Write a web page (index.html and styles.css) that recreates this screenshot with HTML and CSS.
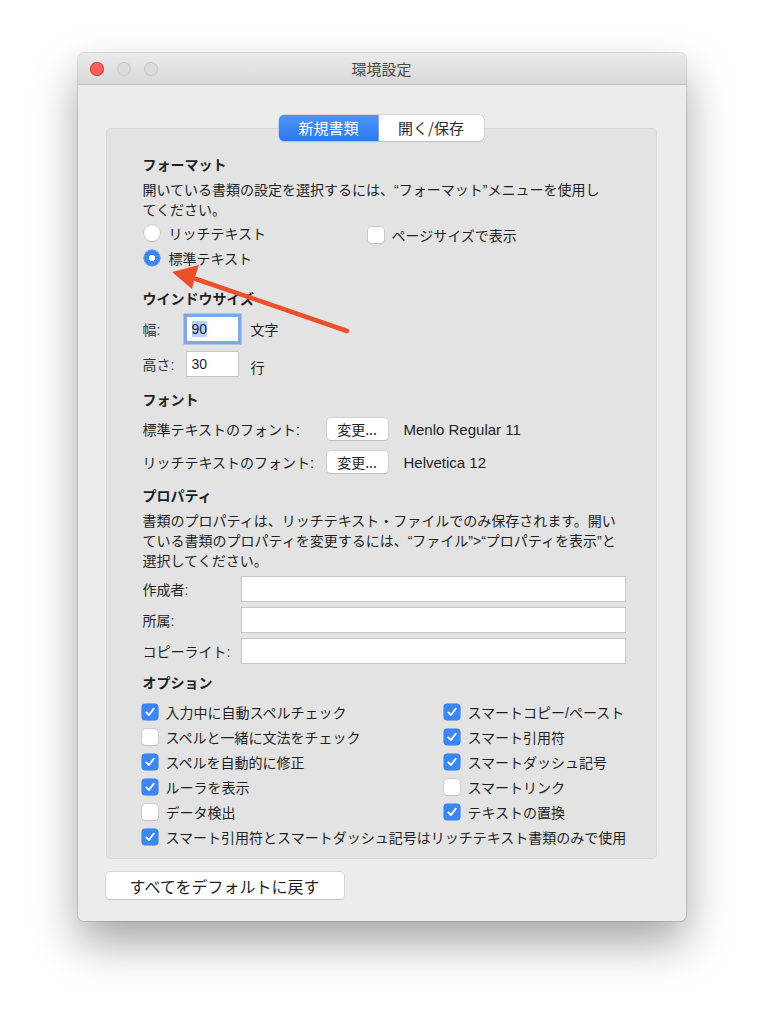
FILE: index.html
```html
<!DOCTYPE html>
<html lang="ja">
<head>
    <meta charset="UTF-8">
    <title>環境設定</title>
    <link rel="stylesheet" href="styles.css">
</head>
<body>
    <div class="window">
        <div class="titlebar">
            <div class="lights">
                <span class="light close"></span>
                <span class="light"></span>
                <span class="light"></span>
            </div>
            <div class="title">環境設定</div>
            <div></div>
        </div>

        <div class="prefs">
            <div class="tabs">
                <span class="tab active">新規書類</span>
                <span class="tab">開く/保存</span>
            </div>

            <div class="group">
                <!-- Format -->
                <div class="section">
                    <div class="section-title">フォーマット</div>
                    <div class="desc">開いている書類の設定を選択するには、“フォーマット”メニューを使用し<br>てください。</div>
                    <div class="format-options">
                        <label class="option"><span class="radio"></span>リッチテキスト</label>
                        <label class="option page-size"><span class="check"></span>ページサイズで表示</label>
                        <label class="option"><span class="radio on"></span>標準テキスト</label>
                    </div>
                </div>

                <!-- Window size -->
                <div class="section size">
                    <div class="section-title">ウインドウサイズ</div>
                    <div class="size-row">
                        <span class="size-label">幅:</span>
                        <span class="field small focused"><span class="sel">90</span></span>
                        <span class="unit">文字</span>
                    </div>
                    <div class="size-row">
                        <span class="size-label">高さ:</span>
                        <span class="field small">30</span>
                        <span class="unit unit-low">行</span>
                    </div>
                </div>

                <!-- Font -->
                <div class="section font">
                    <div class="section-title">フォント</div>
                    <div class="font-row">
                        <span class="font-label">標準テキストのフォント:</span>
                        <button class="btn">変更...</button>
                        <span class="font-name">Menlo Regular 11</span>
                    </div>
                    <div class="font-row">
                        <span class="font-label">リッチテキストのフォント:</span>
                        <button class="btn">変更...</button>
                        <span class="font-name">Helvetica 12</span>
                    </div>
                </div>

                <!-- Properties -->
                <div class="section props">
                    <div class="section-title">プロパティ</div>
                    <div class="desc">書類のプロパティは、リッチテキスト・ファイルでのみ保存されます。開い<br>ている書類のプロパティを変更するには、“ファイル”&gt;“プロパティを表示”と<br>選択してください。</div>
                    <div class="prop-row">
                        <span class="prop-label">作成者:</span>
                        <span class="field wide"></span>
                    </div>
                    <div class="prop-row">
                        <span class="prop-label">所属:</span>
                        <span class="field wide"></span>
                    </div>
                    <div class="prop-row">
                        <span class="prop-label">コピーライト:</span>
                        <span class="field wide"></span>
                    </div>
                </div>

                <!-- Options -->
                <div class="section options">
                    <div class="section-title">オプション</div>
                    <div class="option-grid">
                        <label class="option"><span class="check on"></span>入力中に自動スペルチェック</label>
                        <label class="option"><span class="check on"></span>スマートコピー/ペースト</label>
                        <label class="option"><span class="check"></span>スペルと一緒に文法をチェック</label>
                        <label class="option"><span class="check on"></span>スマート引用符</label>
                        <label class="option"><span class="check on"></span>スペルを自動的に修正</label>
                        <label class="option"><span class="check on"></span>スマートダッシュ記号</label>
                        <label class="option"><span class="check on"></span>ルーラを表示</label>
                        <label class="option"><span class="check"></span>スマートリンク</label>
                        <label class="option"><span class="check"></span>データ検出</label>
                        <label class="option"><span class="check on"></span>テキストの置換</label>
                        <label class="option span"><span class="check on"></span>スマート引用符とスマートダッシュ記号はリッチテキスト書類のみで使用</label>
                    </div>
                </div>
            </div>

            <button class="btn reset">すべてをデフォルトに戻す</button>
        </div>

        <svg class="arrow" width="200" height="80" viewBox="0 0 200 80">
            <line x1="179" y1="72" x2="28" y2="20" stroke="#ec4f2c" stroke-width="4.5" stroke-linecap="round"/>
            <polygon points="4,13 31,6 27,18 24,30" fill="#ec4f2c"/>
        </svg>
    </div>
</body>
</html>
```

FILE: styles.css
```css
body {
    margin: 0;
    padding-bottom: 100px;
    background: #ffffff;
    font-family: "Liberation Sans", "Noto Sans CJK JP", sans-serif;
    font-size: 14px;
    color: #1f1f1f;
}

.window {
    position: relative;
    width: 608px;
    margin: 53px auto 0;
    background: #ececec;
    border-radius: 6px;
    box-shadow: 0 0 0 1px rgba(0,0,0,0.12), 0 22px 45px rgba(0,0,0,0.35);
}

.titlebar {
    display: grid;
    grid-template-columns: 1fr auto 1fr;
    align-items: center;
    height: 32px;
    background: linear-gradient(#ebebeb, #d8d8d8);
    border-bottom: 1px solid #c4c4c4;
    border-radius: 6px 6px 0 0;
    box-sizing: border-box;
}

.lights {
    display: flex;
    gap: 13px;
    padding-left: 12px;
}

.light {
    width: 14px;
    height: 14px;
    border-radius: 50%;
    background: #dcdcdc;
    box-shadow: inset 0 0 0 1px #c9c9c9;
}

.light.close {
    background: #fc605c;
    box-shadow: inset 0 0 0 1px #e0443f;
}

.title {
    font-family: "Noto Sans CJK JP", sans-serif;
    font-size: 15px;
    color: #4a4a4a;
}

.prefs {
    padding: 30px 29px 22px 28px;
}

.tabs {
    position: relative;
    z-index: 1;
    display: flex;
    justify-content: center;
    margin-bottom: -13px;
}

.tab {
    height: 26px;
    line-height: 26px;
    text-align: center;
    font-family: "Noto Sans CJK JP", sans-serif;
    font-size: 15px;
    background: #ffffff;
    color: #2a2a2a;
    box-shadow: 0 0 0 0.5px #bdbdbd, 0 1px 1px rgba(0,0,0,0.15);
}

.tab.active {
    width: 100px;
    background: linear-gradient(#4d95f8, #2c79f3);
    color: #ffffff;
    border-radius: 5px 0 0 5px;
}

.tab:last-child {
    width: 105px;
    border-radius: 0 5px 5px 0;
}

.group {
    background: #e3e3e3;
    border-radius: 5px;
    box-shadow: inset 0 0 0 1px #dadada;
    padding: 27px 32px 10px 37px;
}

.section-title {
    font-weight: bold;
    line-height: 20px;
}

.desc {
    margin-top: 5px;
    line-height: 20px;
    white-space: nowrap;
}

.option {
    display: flex;
    align-items: center;
    height: 25px;
    white-space: nowrap;
    box-sizing: border-box;
}

.format-options {
    display: grid;
    grid-template-columns: 225px auto;
}

.page-size {
    padding-top: 4px;
}

.radio {
    width: 16px;
    height: 16px;
    margin: 0 9px 0 1px;
    border-radius: 50%;
    background: #ffffff;
    box-shadow: 0 0 0 0.5px #b8b8b8, 0 1px 1px rgba(0,0,0,0.12);
    box-sizing: border-box;
}

.radio.on {
    background: radial-gradient(circle, #ffffff 0 3px, #3b86f7 3.5px);
    box-shadow: 0 0 0 0.5px #2f74de;
}

.check {
    flex-shrink: 0;
    width: 16px;
    height: 16px;
    margin-right: 8px;
    border-radius: 3.5px;
    background: #ffffff;
    box-shadow: 0 0 0 0.5px #b8b8b8, 0 1px 1px rgba(0,0,0,0.12);
}

.check.on {
    background: #3b86f7 url("data:image/svg+xml,%3Csvg xmlns='http://www.w3.org/2000/svg' width='16' height='16'%3E%3Cpath d='M4.3 8.4 L7 11 L11.8 4.6' fill='none' stroke='white' stroke-width='1.8' stroke-linecap='round' stroke-linejoin='round'/%3E%3C/svg%3E") no-repeat center;
    box-shadow: 0 0 0 0.5px #2f74de;
}

.size {
    margin-top: 19px;
}

.size-row {
    display: flex;
    align-items: center;
    height: 30px;
    margin-top: 5px;
}

.size-label {
    width: 44px;
    color: #333333;
}

.field {
    display: block;
    height: 24px;
    line-height: 24px;
    padding: 0 5px;
    background: #ffffff;
    box-shadow: 0 0 0 1px #c6c6c6;
    box-sizing: border-box;
}

.field.small {
    width: 51px;
}

.field.focused {
    box-shadow: 0 0 0 1px #7ea9ea, 0 0 0 3.5px rgba(96,145,232,0.75);
}

.sel {
    background: #b3d2fc;
}

.unit {
    margin-left: 13px;
}

.unit-low {
    margin-top: 6px;
}

.font {
    margin-top: 11px;
}

.font-row {
    display: flex;
    align-items: center;
    height: 28px;
    margin-top: 5px;
}

.font-row:first-of-type {
    margin-top: 7px;
}

.font-label {
    width: 184px;
    white-space: nowrap;
}

.btn {
    height: 22px;
    padding: 0;
    border: none;
    border-radius: 4px;
    background: #ffffff;
    box-shadow: 0 0 0 0.5px #c4c4c4, 0 1px 1px rgba(0,0,0,0.18);
    font-family: "Noto Sans CJK JP", sans-serif;
    font-size: 14px;
    color: #1f1f1f;
}

.font-row .btn {
    width: 61px;
}

.font-name {
    margin-left: 16px;
    font-size: 15px;
}

.props {
    margin-top: 10px;
}

.prop-row {
    display: flex;
    align-items: center;
    height: 28px;
    margin-top: 3px;
}

.desc + .prop-row {
    margin-top: 4px;
}

.prop-label {
    width: 99px;
    flex-shrink: 0;
}

.field.wide {
    flex: 1;
}

.options {
    margin-top: 8px;
}

.option-grid {
    display: grid;
    grid-template-columns: 302px 1fr;
    margin-top: 6px;
}

.option-grid .option .check {
    margin-left: -1px;
}

.option-grid .span {
    grid-column: 1 / 3;
}

.reset {
    display: block;
    width: 238px;
    height: 27px;
    margin-top: 13px;
    font-size: 16px;
}

.arrow {
    position: absolute;
    left: 90px;
    top: 206px;
    pointer-events: none;
}
```
